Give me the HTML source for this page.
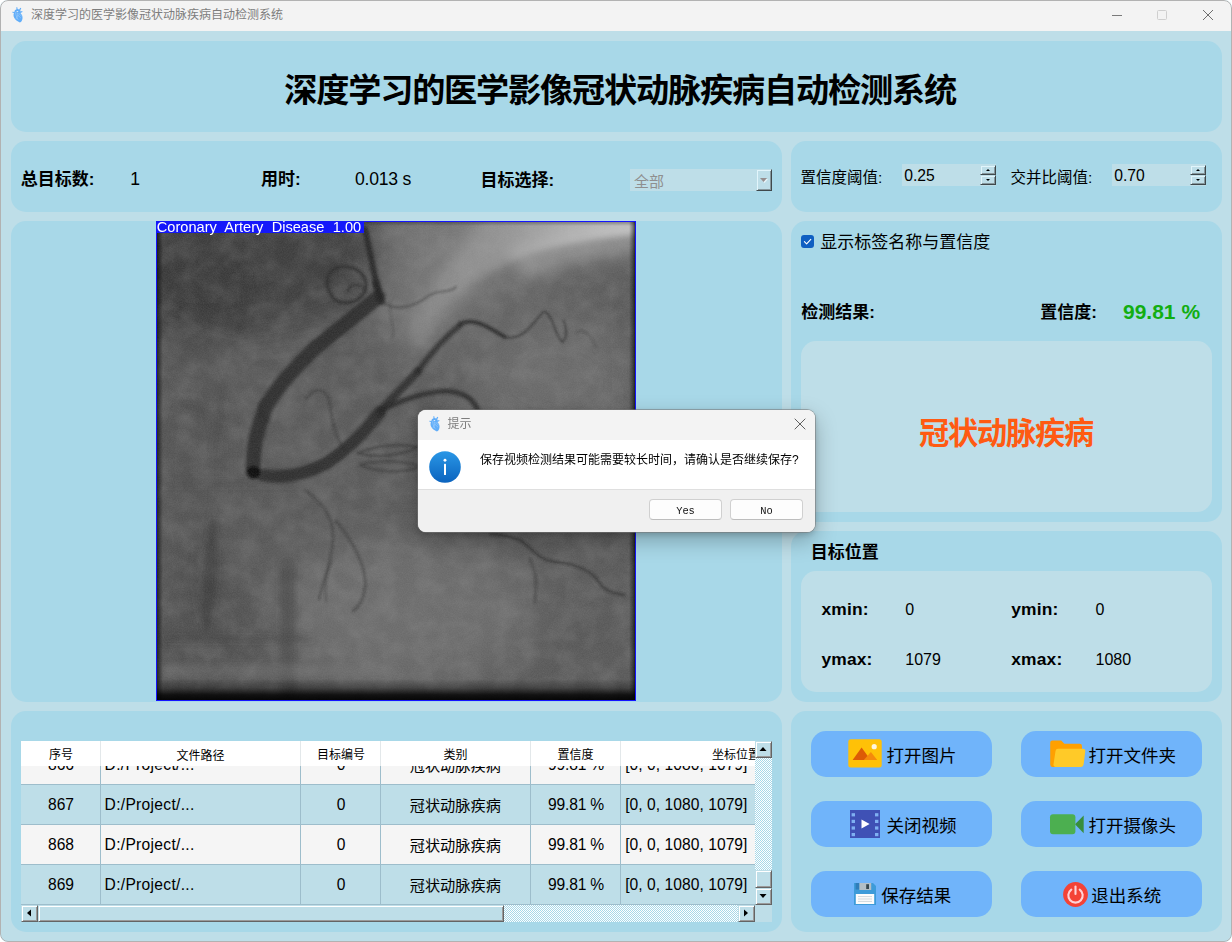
<!DOCTYPE html>
<html lang="zh-CN"><head><meta charset="utf-8"><title>深度学习的医学影像冠状动脉疾病自动检测系统</title>
<style>
html,body{margin:0;padding:0;background:#fff;}
body{width:1232px;height:942px;overflow:hidden;font-family:"Liberation Sans",sans-serif;}
#win{position:relative;width:1232px;height:942px;overflow:hidden;background:#BEDEE8;box-sizing:border-box;border-radius:8px 8px 8px 8px;}
#frame{position:absolute;left:0;top:0;width:1230px;height:940px;border:1px solid #b2b2b2;border-radius:8px;pointer-events:none;}
.g{position:absolute;overflow:visible;display:block;}
.h{position:absolute;color:#000;white-space:nowrap;line-height:1;font-family:"Liberation Sans","Noto Sans CJK SC",sans-serif;}
.hb{font-weight:bold;}
.t{position:absolute;white-space:nowrap;line-height:1;font-family:"Liberation Sans",sans-serif;}
.panel{background:#A8D8E8;border-radius:15px;}
.inner{background:#BEDEE8;border-radius:15px;}
.btn{background:#70B4FA;border-radius:15px;}
</style></head>
<body>
<div id="win">
<div class="" style="position:absolute;left:0px;top:0px;width:1232px;height:31px;background:#F3F3F3;border-radius:8px 8px 0 0;"></div>
<svg class="g" style="left:11.7px;top:7.1px" width="10.8" height="15.6" viewBox="0 0 10.8 15.6"><path d="M4.3 0.3 L5.3 0.2 L5.6 2 L7.2 2.4 L8.3 0.8 L9.3 1.3 L8.3 3.2 L8.6 4.4 L10.2 3.9 L10.5 4.9 L8.4 5.9 C10 7.2 10.8 9.4 10.5 11.4 C10.2 13.6 9.2 15 7.9 15.4 C5.4 14.6 3.2 13 2.2 10.8 C1.3 8.8 1.4 7 2 5.9 L0.2 5.6 L0.4 4.7 L2.4 4.9 C2.4 3.6 3.2 2.6 4.5 2.2 Z" fill="#62AEF9"/><ellipse cx="5.4" cy="4.4" rx="0.95" ry="0.5" fill="#EAF1F8"/><path d="M3.6 5.6 C3.8 8 4.6 10.4 6 12.4 M5.2 5.8 C5.6 8 7 9.8 8.6 10.8 M6.9 6.4 C7.6 7.6 8.4 8.4 9.4 8.9 M4.2 11.6 C4.8 10.6 5.6 9.4 5.8 8.2" stroke="#A9D3FC" stroke-width="0.55" fill="none" stroke-linecap="round"/></svg>
<span class="h" style="left:31.0px;top:8.9px;font-size:12.0px;color:#7d7d7d;">深度学习的医学影像冠状动脉疾病自动检测系统</span>
<svg class="g" style="left:1100px;top:0" width="132" height="31" viewBox="0 0 132 31"><path d="M12 15.5 H22" stroke="#7a7a7a" stroke-width="1"/><rect x="57.5" y="10.5" width="9" height="9" rx="1" fill="none" stroke="#cfcfcf" stroke-width="1"/><path d="M103 10 L113 20 M113 10 L103 20" stroke="#6e6e6e" stroke-width="1"/></svg>
<div class="panel" style="position:absolute;left:11px;top:41px;width:1211px;height:91px;"></div>
<div class="panel" style="position:absolute;left:11px;top:141px;width:771px;height:71px;"></div>
<div class="panel" style="position:absolute;left:791px;top:141px;width:431px;height:71px;"></div>
<div class="panel" style="position:absolute;left:11px;top:221px;width:771px;height:481px;"></div>
<div class="panel" style="position:absolute;left:791px;top:221px;width:431px;height:301px;"></div>
<div class="panel" style="position:absolute;left:791px;top:531px;width:431px;height:171px;"></div>
<div class="panel" style="position:absolute;left:11px;top:711px;width:771px;height:221px;"></div>
<div class="panel" style="position:absolute;left:791px;top:711px;width:431px;height:221px;"></div>
<span class="h hb" style="left:284.2px;top:73.6px;font-size:33.2px;letter-spacing:-1.2px;">深度学习的医学影像冠状动脉疾病自动检测系统</span>
<span class="h hb" style="left:20.8px;top:171.2px;font-size:17.0px">总目标数:</span>
<span class="t" style="left:130.20px;top:170.90px;font-size:17.60px;color:#000;">1</span>
<span class="h hb" style="left:261.0px;top:171.2px;font-size:17.0px">用时:</span>
<span class="t" style="left:355.00px;top:170.90px;font-size:17.60px;color:#000;letter-spacing:-0.25px;">0.013 s</span>
<span class="h hb" style="left:480.4px;top:172.0px;font-size:17.0px">目标选择:</span>
<div class="" style="position:absolute;left:630px;top:169px;width:142px;height:22px;background:#BEDEE8;"></div>
<span class="h" style="left:634.0px;top:173.6px;font-size:15.0px;color:#8f8f8f;">全部</span>
<div style="position:absolute;left:756px;top:169px;width:16px;height:22px;box-sizing:border-box;background:#BEDEE8;border-left:1px solid #BEDEE8;border-top:1px solid #BEDEE8;border-right:1px solid #3f484b;border-bottom:1px solid #3f484b;box-shadow:inset 1px 1px 0 #e2f5fb,inset -1px -1px 0 #86979c;"></div>
<svg class="g" style="left:760px;top:178px" width="8" height="5" viewBox="0 0 8 5"><path d="M1 1 L8 1 L4.5 5 Z" fill="#eaf6fa"/><path d="M0 0 H7 L3.5 4 Z" fill="#968f8f"/></svg>
<span class="h" style="left:800.6px;top:169.6px;font-size:15.5px">置信度阈值:</span>
<div class="" style="position:absolute;left:902px;top:164px;width:94px;height:22px;background:#BEDEE8;"></div>
<span class="t" style="left:904.20px;top:167.91px;font-size:15.70px;color:#000;">0.25</span>
<div style="position:absolute;left:980px;top:165px;width:16px;height:10px;box-sizing:border-box;background:#BEDEE8;border-left:1px solid #BEDEE8;border-top:1px solid #BEDEE8;border-right:1px solid #3f484b;border-bottom:1px solid #3f484b;box-shadow:inset 1px 1px 0 #e2f5fb,inset -1px -1px 0 #86979c;"></div>
<svg class="g" style="left:985.5px;top:169px" width="4" height="2" viewBox="0 0 4 2"><path d="M0 2 L2 0 L4 2 Z" fill="#000"/></svg>
<div style="position:absolute;left:980px;top:175px;width:16px;height:10px;box-sizing:border-box;background:#BEDEE8;border-left:1px solid #BEDEE8;border-top:1px solid #BEDEE8;border-right:1px solid #3f484b;border-bottom:1px solid #3f484b;box-shadow:inset 1px 1px 0 #e2f5fb,inset -1px -1px 0 #86979c;"></div>
<svg class="g" style="left:985.5px;top:179px" width="4" height="2" viewBox="0 0 4 2"><path d="M0 0 L4 0 L2 2 Z" fill="#000"/></svg>
<span class="h" style="left:1010.6px;top:169.6px;font-size:15.5px">交并比阈值:</span>
<div class="" style="position:absolute;left:1112px;top:164px;width:94px;height:22px;background:#BEDEE8;"></div>
<span class="t" style="left:1114.20px;top:167.91px;font-size:15.70px;color:#000;">0.70</span>
<div style="position:absolute;left:1190px;top:165px;width:16px;height:10px;box-sizing:border-box;background:#BEDEE8;border-left:1px solid #BEDEE8;border-top:1px solid #BEDEE8;border-right:1px solid #3f484b;border-bottom:1px solid #3f484b;box-shadow:inset 1px 1px 0 #e2f5fb,inset -1px -1px 0 #86979c;"></div>
<svg class="g" style="left:1195.5px;top:169px" width="4" height="2" viewBox="0 0 4 2"><path d="M0 2 L2 0 L4 2 Z" fill="#000"/></svg>
<div style="position:absolute;left:1190px;top:175px;width:16px;height:10px;box-sizing:border-box;background:#BEDEE8;border-left:1px solid #BEDEE8;border-top:1px solid #BEDEE8;border-right:1px solid #3f484b;border-bottom:1px solid #3f484b;box-shadow:inset 1px 1px 0 #e2f5fb,inset -1px -1px 0 #86979c;"></div>
<svg class="g" style="left:1195.5px;top:179px" width="4" height="2" viewBox="0 0 4 2"><path d="M0 0 L4 0 L2 2 Z" fill="#000"/></svg>
<svg class="g" style="left:156px;top:221px" width="480" height="480" viewBox="0 0 480 480">
<defs>
<filter id="b1" x="-20%" y="-20%" width="140%" height="140%"><feGaussianBlur stdDeviation="0.9"/></filter>
<filter id="b15" x="-20%" y="-20%" width="140%" height="140%"><feGaussianBlur stdDeviation="1.5"/></filter>
<filter id="b3" x="-20%" y="-20%" width="140%" height="140%"><feGaussianBlur stdDeviation="3"/></filter>
<filter id="b8" x="-30%" y="-30%" width="160%" height="160%"><feGaussianBlur stdDeviation="7"/></filter>
<filter id="b20" x="-40%" y="-40%" width="180%" height="180%"><feGaussianBlur stdDeviation="20"/></filter>
<filter id="nz" x="0" y="0" width="100%" height="100%"><feTurbulence type="fractalNoise" baseFrequency="0.8" numOctaves="2" seed="7"/><feColorMatrix type="matrix" values="0 0 0 0 0.5  0 0 0 0 0.5  0 0 0 0 0.5  0.6 0 0 0 -0.14"/></filter>
<filter id="nz2" x="0" y="0" width="100%" height="100%"><feTurbulence type="fractalNoise" baseFrequency="0.05" numOctaves="3" seed="11"/><feColorMatrix type="matrix" values="0 0 0 0 0.40  0 0 0 0 0.40  0 0 0 0 0.40  1.4 0 0 0 -0.45"/></filter>
<linearGradient id="vb" x1="0" y1="0" x2="0" y2="1"><stop offset="0" stop-color="#000" stop-opacity="0"/><stop offset=".4" stop-color="#000" stop-opacity=".32"/><stop offset=".72" stop-color="#000" stop-opacity=".82"/><stop offset="1" stop-color="#000" stop-opacity=".96"/></linearGradient>
<linearGradient id="vt" x1="0" y1="1" x2="0" y2="0"><stop offset="0" stop-color="#000" stop-opacity="0"/><stop offset="1" stop-color="#000" stop-opacity=".35"/></linearGradient>
<linearGradient id="vl" x1="1" y1="0" x2="0" y2="0"><stop offset="0" stop-color="#000" stop-opacity="0"/><stop offset="1" stop-color="#000" stop-opacity=".7"/></linearGradient>
<linearGradient id="vr" x1="0" y1="0" x2="1" y2="0"><stop offset="0" stop-color="#000" stop-opacity="0"/><stop offset=".6" stop-color="#000" stop-opacity=".4"/><stop offset="1" stop-color="#000" stop-opacity=".85"/></linearGradient>
<linearGradient id="wg" gradientUnits="userSpaceOnUse" x1="270" y1="0" x2="480" y2="0"><stop offset="0" stop-color="#c8c8c8" stop-opacity="0"/><stop offset=".35" stop-color="#c8c8c8" stop-opacity=".18"/><stop offset=".7" stop-color="#cacaca" stop-opacity=".62"/><stop offset="1" stop-color="#d0d0d0" stop-opacity=".8"/></linearGradient>
<clipPath id="cp"><rect x="0" y="0" width="480" height="480"/></clipPath>
</defs>
<g clip-path="url(#cp)">
<rect width="480" height="480" fill="#5a5a5a"/>
<!-- broad light / dark fields -->
<g filter="url(#b20)">
<path d="M228 -20 H500 V34 Q380 44 320 90 Q285 120 262 146 L232 118 Z" fill="#7a7a7a" opacity=".85"/>
<ellipse cx="80" cy="35" rx="150" ry="75" fill="#3a3a3a" opacity=".85"/>
<ellipse cx="30" cy="70" rx="60" ry="60" fill="#383838" opacity=".5"/>
<ellipse cx="30" cy="250" rx="45" ry="120" fill="#505050" opacity=".6"/>
<ellipse cx="45" cy="410" rx="60" ry="70" fill="#4c4c4c" opacity=".7"/>
<ellipse cx="250" cy="390" rx="130" ry="75" fill="#717171" opacity=".8"/>
<ellipse cx="400" cy="160" rx="90" ry="70" fill="#707070" opacity=".7"/>
<ellipse cx="440" cy="330" rx="50" ry="50" fill="#5c5c5c" opacity=".6"/>
</g>
<!-- bright arc upper right (lung edge) -->
<g filter="url(#b8)">
<path d="M262 128 Q300 62 372 32 Q430 12 480 8 L480 -10 L330 -10 Q290 40 250 110 Z" fill="#a0a0a0" opacity=".45"/>
<path d="M360 44 Q415 22 485 14" stroke="#c0c0c0" stroke-width="30" fill="none" opacity=".36"/>
<path d="M470 60 Q476 200 470 330" stroke="#555" stroke-width="14" fill="none" opacity=".3"/>
</g>
<g filter="url(#b3)"><path d="M270 -6 L486 -6 L486 13 Q420 19 372 33 Q330 48 296 78 Q276 96 262 122 Q262 50 270 -6 Z" fill="url(#wg)"/></g>
<!-- mottled tissue texture -->
<rect width="480" height="480" filter="url(#nz2)" opacity=".24"/>
<!-- soft anatomical shadows -->
<g filter="url(#b3)" fill="none" stroke-linecap="round" stroke-linejoin="round">
<path d="M88 52 Q94 82 84 106" stroke="#333" stroke-width="9" opacity=".55"/>
<path d="M24 72 Q52 104 84 106" stroke="#3a3a3a" stroke-width="10" opacity=".35"/>
<path d="M57 298 C47 338 44 378 50 410 C61 380 63 338 57 298 Z" fill="#303030" stroke="#303030" stroke-width="3" opacity=".5"/>
<path d="M40 330 Q36 370 46 400" stroke="#3a3a3a" stroke-width="4" opacity=".3"/>
<path d="M132 345 V470" stroke="#3a3a3a" stroke-width="16" opacity=".4"/>
<path d="M0 262 H150" stroke="#444" stroke-width="6" opacity=".3"/>
<path d="M8 418 H155" stroke="#3c3c3c" stroke-width="5" opacity=".38"/>
<path d="M68 160 L58 240" stroke="#3c3c3c" stroke-width="6" opacity=".35"/>
<path d="M30 185 L80 200" stroke="#3c3c3c" stroke-width="5" opacity=".3"/>
<path d="M10 450 H230" stroke="#7a7a7a" stroke-width="12" opacity=".35"/>
</g>
<!-- thin vessels -->
<g filter="url(#b1)" fill="none" stroke="#2c2c2c" stroke-linecap="round" stroke-linejoin="round">
<path d="M174 72 C166 56 176 44 192 46 C206 48 214 60 208 72 C200 84 180 86 174 72 Z" stroke-width="3.4" opacity=".75"/>
<path d="M192 70 C194 62 206 62 210 70" stroke-width="2.4" opacity=".65"/>
<path d="M228 82 C240 90 256 86 268 78 C282 66 292 74 300 66" stroke-width="1.8" opacity=".45"/>
<path d="M201 232 C222 224 246 222 262 226 C248 234 222 238 201 232 Z" stroke-width="2" opacity=".55"/>
<path d="M204 244 C226 238 252 240 264 246 C248 252 222 252 204 244 Z" stroke-width="2" opacity=".5"/>
<path d="M150 178 C160 164 172 168 174 184 C176 204 182 222 190 230" stroke-width="2.2" opacity=".45"/>
<path d="M150 270 C166 282 178 296 177 318 C176 340 168 356 163 378" stroke-width="2.4" opacity=".42"/>
<path d="M180 300 C192 314 200 326 206 344 C212 362 210 380 197 390" stroke-width="2.4" opacity=".45"/>
<path d="M176 340 C170 352 168 364 170 380" stroke-width="2" opacity=".35"/>
<path d="M335 313 C348 314 356 316 364 319 C374 326 380 334 388 338 C398 342 408 341 417 344 C426 347 432 350 437 354 C443 360 445 365 449 368 C456 372 462 373 468 374" stroke-width="2.8" opacity=".55"/>
<path d="M374 338 C377 346 380 352 380 360 C380 368 379 374 379 381" stroke-width="2.6" opacity=".42"/>
<path d="M304 102 C319 96 330 106 349 116 C366 120 376 104 387 91 C396 90 398 112 406 121 C412 118 410 106 408 100" stroke-width="2.2" opacity=".6"/>
<path d="M420 112 C428 106 436 116 440 126" stroke-width="1.6" opacity=".35"/>
<path d="M108 178 C100 186 104 196 112 200" stroke-width="2" opacity=".4"/>
<path d="M234 80 C232 96 240 104 236 118" stroke-width="1.5" opacity=".3"/>
</g>
<!-- main vessels -->
<g filter="url(#b15)" fill="none" stroke="#222" stroke-linecap="round" stroke-linejoin="round">
<path d="M209 8 C213 28 218 50 223 76" stroke-width="6" opacity=".88"/>
<path d="M220 62 L225 80" stroke-width="8" opacity=".8"/>
<path d="M222 76 C202 93 180 110 158 128 C140 146 120 166 109 188 C101 208 97 230 97 248" stroke-width="14.6" opacity=".74"/>
<path d="M106 254 C128 258 150 253 171 242 C192 228 209 211 224 191" stroke-width="12.6" opacity=".74"/>
<path d="M224 191 C236 176 250 164 262 150" stroke-width="8.2" opacity=".74"/>
<path d="M262 150 C272 136 288 117 304 104" stroke-width="6" opacity=".72"/>
<path d="M304 104 C316 96 330 104 349 116" stroke-width="3.6" opacity=".7"/>
<path d="M226 189 C248 178 268 171 290 170 C308 171 318 178 322 190" stroke-width="5.2" opacity=".75"/>
<circle cx="97.5" cy="251.3" r="6.8" fill="#101010" stroke="none" opacity=".96"/>
</g>
<!-- film grain -->
<rect width="480" height="480" filter="url(#nz)" opacity=".3"/>
<!-- vignette -->
<rect x="0" y="458" width="480" height="22" fill="url(#vb)"/>
<rect x="0" y="0" width="480" height="5" fill="url(#vt)"/>
<rect x="0" y="0" width="7" height="480" fill="url(#vl)"/>
<rect x="473" y="0" width="7" height="480" fill="url(#vr)"/>
</g>
<!-- detection box + label -->
<rect x="0.5" y="0.5" width="479" height="479" fill="none" stroke="#1414FF" stroke-width="1"/>
<rect x="0" y="0" width="208" height="12" fill="#1418FA"/>
</svg>
<span class="t" style="left:156.80px;top:219.94px;font-size:14.60px;color:#fff;word-spacing:4.3px;">Coronary Artery Disease 1.00</span>
<div style="position:absolute;left:801px;top:235px;width:13px;height:13px;border-radius:3px;background:#0F5FC2;"></div>
<svg class="g" style="left:801px;top:235px" width="13" height="13" viewBox="0 0 13 13"><path d="M3.4 6.7 L5.6 8.9 L9.8 4.4" fill="none" stroke="#fff" stroke-width="1.1" stroke-linecap="round" stroke-linejoin="round"/></svg>
<span class="h" style="left:820.3px;top:233.8px;font-size:17.0px">显示标签名称与置信度</span>
<span class="h hb" style="left:801.2px;top:303.7px;font-size:17.0px">检测结果:</span>
<span class="h hb" style="left:1040.3px;top:303.7px;font-size:17.0px">置信度:</span>
<span class="t" style="left:1123.00px;top:300.82px;font-size:21.00px;color:#12AE12;font-weight:bold;">99.81 %</span>
<div class="inner" style="position:absolute;left:801px;top:341px;width:411px;height:171px;"></div>
<span class="h hb" style="left:919.0px;top:419.3px;font-size:30.2px;color:#FF5A12;letter-spacing:-1.2px;">冠状动脉疾病</span>
<span class="h hb" style="left:810.8px;top:543.8px;font-size:17.0px">目标位置</span>
<div class="inner" style="position:absolute;left:801px;top:571px;width:411px;height:121px;"></div>
<span class="t" style="left:821.50px;top:600.97px;font-size:17.40px;color:#000;font-weight:bold;letter-spacing:0.15px;">xmin:</span>
<span class="t" style="left:905.30px;top:602.16px;font-size:16.00px;color:#000;">0</span>
<span class="t" style="left:1011.30px;top:600.97px;font-size:17.40px;color:#000;font-weight:bold;letter-spacing:0.15px;">ymin:</span>
<span class="t" style="left:1095.50px;top:602.16px;font-size:16.00px;color:#000;">0</span>
<span class="t" style="left:821.50px;top:650.97px;font-size:17.40px;color:#000;font-weight:bold;letter-spacing:0.15px;">ymax:</span>
<span class="t" style="left:905.30px;top:652.16px;font-size:16.00px;color:#000;">1079</span>
<span class="t" style="left:1011.30px;top:650.97px;font-size:17.40px;color:#000;font-weight:bold;letter-spacing:0.15px;">xmax:</span>
<span class="t" style="left:1095.50px;top:652.16px;font-size:16.00px;color:#000;">1080</span>
<div class="btn" style="position:absolute;left:811px;top:731px;width:181px;height:46px;"></div>
<div class="btn" style="position:absolute;left:811px;top:801px;width:181px;height:46px;"></div>
<div class="btn" style="position:absolute;left:811px;top:871px;width:181px;height:46px;"></div>
<div class="btn" style="position:absolute;left:1021px;top:731px;width:181px;height:46px;"></div>
<div class="btn" style="position:absolute;left:1021px;top:801px;width:181px;height:46px;"></div>
<div class="btn" style="position:absolute;left:1021px;top:871px;width:181px;height:46px;"></div>
<svg class="g" style="left:848px;top:739.2px" width="34" height="29" viewBox="0 0 34 29"><rect x="0.3" y="0.2" width="33.4" height="28.4" rx="2.5" fill="#FFC107"/><path d="M4.6 21 L13.6 8.4 L22.6 21 Z" fill="#DD5B06"/><path d="M15.8 21 L22.9 12.9 L29.2 21 Z" fill="#F58A0B"/><circle cx="26.2" cy="7.7" r="2.6" fill="#FFF6DC"/></svg>
<span class="h" style="left:886.6px;top:747.5px;font-size:17.5px">打开图片</span>
<svg class="g" style="left:1050px;top:740px" width="36" height="28" viewBox="0 0 36 28"><path d="M2.4 0.4 H11.2 L14.4 3.8 H29.6 Q32 3.8 32 6.2 V24 Q32 26.9 29.2 26.9 H2.6 Q0.2 26.9 0.2 24.4 V2.8 Q0.2 0.4 2.4 0.4 Z" fill="#FFA000"/><path d="M8 8.7 H33 Q35.6 8.7 35.3 11.2 L33.6 24.6 Q33.3 26.9 31 26.9 H5.4 Q3.2 26.9 3.5 24.6 L5.5 10.9 Q5.8 8.7 8 8.7 Z" fill="#FFCA28"/></svg>
<span class="h" style="left:1088.6px;top:747.5px;font-size:17.5px">打开文件夹</span>
<svg class="g" style="left:850px;top:810px" width="30" height="28" viewBox="0 0 30 28"><rect x="0" y="0" width="30" height="28" fill="#3F51B5"/><rect x="1.6" y="3.2" width="3.4" height="3.2" fill="#7FB0F2"/><rect x="25.0" y="3.2" width="3.4" height="3.2" fill="#7FB0F2"/><rect x="1.6" y="9.8" width="3.4" height="3.2" fill="#7FB0F2"/><rect x="25.0" y="9.8" width="3.4" height="3.2" fill="#7FB0F2"/><rect x="1.6" y="16.4" width="3.4" height="3.2" fill="#7FB0F2"/><rect x="25.0" y="16.4" width="3.4" height="3.2" fill="#7FB0F2"/><rect x="1.6" y="23" width="3.4" height="3.2" fill="#7FB0F2"/><rect x="25.0" y="23" width="3.4" height="3.2" fill="#7FB0F2"/><path d="M11.5 9.4 L19.6 14 L11.5 18.6 Z" fill="#fff"/></svg>
<span class="h" style="left:886.6px;top:817.5px;font-size:17.5px">关闭视频</span>
<svg class="g" style="left:1050px;top:813.5px" width="35" height="21" viewBox="0 0 35 21"><path d="M25 10.2 L33.7 1.6 V19.2 Z" fill="#388E3C"/><rect x="0" y="0.3" width="25.4" height="20" rx="3" fill="#4CAF50"/></svg>
<span class="h" style="left:1088.6px;top:817.5px;font-size:17.5px">打开摄像头</span>
<svg class="g" style="left:854px;top:883px" width="22" height="22" viewBox="0 0 22 22"><path d="M0 0 H19 L22 3 V22 H0 Z" fill="#3D9BD9"/><rect x="1.6" y="0" width="3.8" height="6.5" fill="#2F7DBA"/><rect x="5.4" y="0" width="11.8" height="7" fill="#B3BEC6"/><rect x="12.2" y="1.2" width="2.8" height="4.8" fill="#37474F"/><rect x="1.8" y="11" width="18.4" height="10" fill="#FCFCFC"/><path d="M4 13.6 H18 M4 16 H18 M4 18.4 H18" stroke="#CFD8DC" stroke-width="1"/></svg>
<span class="h" style="left:881.2px;top:887.5px;font-size:17.5px">保存结果</span>
<svg class="g" style="left:1062.5px;top:881.5px" width="25" height="25" viewBox="0 0 25 25"><circle cx="12.5" cy="12.5" r="12.4" fill="#F44336"/><path d="M8.3 7.6 A7.2 7.2 0 1 0 16.7 7.6" fill="none" stroke="#FFD3D6" stroke-width="2.1" stroke-linecap="round"/><path d="M12.5 4.6 V12" stroke="#FFD3D6" stroke-width="2.1" stroke-linecap="round"/></svg>
<span class="h" style="left:1091.2px;top:887.5px;font-size:17.5px">退出系统</span>
<div style="position:absolute;left:0;top:0;width:755px;height:905px;overflow:hidden;">
<div style="position:absolute;left:0;top:766px;width:755px;height:139px;overflow:hidden;"><div style="position:absolute;left:0;top:-766px;width:755px;height:942px;">
<div class="" style="position:absolute;left:21px;top:745px;width:734px;height:40px;background:#F5F5F5;"></div>
<span class="t" style="left:21.00px;top:757.49px;font-size:15.60px;color:#000;width:80.0px;text-align:center;">866</span>
<span class="t" style="left:104.60px;top:757.49px;font-size:15.60px;color:#000;letter-spacing:0.3px;">D:/Project/...</span>
<span class="t" style="left:301.00px;top:757.49px;font-size:15.60px;color:#000;width:80.0px;text-align:center;">0</span>
<span class="h" style="left:409.7px;top:757.9px;font-size:15.2px">冠状动脉疾病</span>
<span class="t" style="left:531.00px;top:757.49px;font-size:15.60px;color:#000;width:90.0px;text-align:center;letter-spacing:-0.2px;">99.81 %</span>
<span class="t" style="left:625.20px;top:757.49px;font-size:15.60px;color:#000;letter-spacing:0.05px;">[0, 0, 1080, 1079]</span>
<div class="" style="position:absolute;left:21px;top:784px;width:734px;height:1px;background:#9DBDCB;"></div>
<div class="" style="position:absolute;left:21px;top:785px;width:734px;height:40px;background:#BEDEE8;"></div>
<span class="t" style="left:21.00px;top:797.49px;font-size:15.60px;color:#000;width:80.0px;text-align:center;">867</span>
<span class="t" style="left:104.60px;top:797.49px;font-size:15.60px;color:#000;letter-spacing:0.3px;">D:/Project/...</span>
<span class="t" style="left:301.00px;top:797.49px;font-size:15.60px;color:#000;width:80.0px;text-align:center;">0</span>
<span class="h" style="left:409.7px;top:797.9px;font-size:15.2px">冠状动脉疾病</span>
<span class="t" style="left:531.00px;top:797.49px;font-size:15.60px;color:#000;width:90.0px;text-align:center;letter-spacing:-0.2px;">99.81 %</span>
<span class="t" style="left:625.20px;top:797.49px;font-size:15.60px;color:#000;letter-spacing:0.05px;">[0, 0, 1080, 1079]</span>
<div class="" style="position:absolute;left:21px;top:824px;width:734px;height:1px;background:#9DBDCB;"></div>
<div class="" style="position:absolute;left:21px;top:825px;width:734px;height:40px;background:#F5F5F5;"></div>
<span class="t" style="left:21.00px;top:837.49px;font-size:15.60px;color:#000;width:80.0px;text-align:center;">868</span>
<span class="t" style="left:104.60px;top:837.49px;font-size:15.60px;color:#000;letter-spacing:0.3px;">D:/Project/...</span>
<span class="t" style="left:301.00px;top:837.49px;font-size:15.60px;color:#000;width:80.0px;text-align:center;">0</span>
<span class="h" style="left:409.7px;top:837.9px;font-size:15.2px">冠状动脉疾病</span>
<span class="t" style="left:531.00px;top:837.49px;font-size:15.60px;color:#000;width:90.0px;text-align:center;letter-spacing:-0.2px;">99.81 %</span>
<span class="t" style="left:625.20px;top:837.49px;font-size:15.60px;color:#000;letter-spacing:0.05px;">[0, 0, 1080, 1079]</span>
<div class="" style="position:absolute;left:21px;top:864px;width:734px;height:1px;background:#9DBDCB;"></div>
<div class="" style="position:absolute;left:21px;top:865px;width:734px;height:40px;background:#BEDEE8;"></div>
<span class="t" style="left:21.00px;top:877.49px;font-size:15.60px;color:#000;width:80.0px;text-align:center;">869</span>
<span class="t" style="left:104.60px;top:877.49px;font-size:15.60px;color:#000;letter-spacing:0.3px;">D:/Project/...</span>
<span class="t" style="left:301.00px;top:877.49px;font-size:15.60px;color:#000;width:80.0px;text-align:center;">0</span>
<span class="h" style="left:409.7px;top:877.9px;font-size:15.2px">冠状动脉疾病</span>
<span class="t" style="left:531.00px;top:877.49px;font-size:15.60px;color:#000;width:90.0px;text-align:center;letter-spacing:-0.2px;">99.81 %</span>
<span class="t" style="left:625.20px;top:877.49px;font-size:15.60px;color:#000;letter-spacing:0.05px;">[0, 0, 1080, 1079]</span>
<div class="" style="position:absolute;left:21px;top:904px;width:734px;height:1px;background:#9DBDCB;"></div>
<div class="" style="position:absolute;left:100px;top:745px;width:1px;height:160px;background:#9DBDCB;"></div>
<div class="" style="position:absolute;left:300px;top:745px;width:1px;height:160px;background:#9DBDCB;"></div>
<div class="" style="position:absolute;left:380px;top:745px;width:1px;height:160px;background:#9DBDCB;"></div>
<div class="" style="position:absolute;left:530px;top:745px;width:1px;height:160px;background:#9DBDCB;"></div>
<div class="" style="position:absolute;left:620px;top:745px;width:1px;height:160px;background:#9DBDCB;"></div>
</div></div>
<div class="" style="position:absolute;left:21px;top:741px;width:734px;height:25px;background:#FFFFFF;"></div>
<div class="" style="position:absolute;left:100px;top:741px;width:1px;height:25px;background:#E3E8EA;"></div>
<div class="" style="position:absolute;left:300px;top:741px;width:1px;height:25px;background:#E3E8EA;"></div>
<div class="" style="position:absolute;left:380px;top:741px;width:1px;height:25px;background:#E3E8EA;"></div>
<div class="" style="position:absolute;left:530px;top:741px;width:1px;height:25px;background:#E3E8EA;"></div>
<div class="" style="position:absolute;left:620px;top:741px;width:1px;height:25px;background:#E3E8EA;"></div>
<span class="h" style="left:49.0px;top:748.5px;font-size:12.0px">序号</span>
<span class="h" style="left:176.6px;top:749.5px;font-size:12.0px">文件路径</span>
<span class="h" style="left:317.0px;top:748.5px;font-size:12.0px">目标编号</span>
<span class="h" style="left:443.5px;top:748.5px;font-size:12.0px">类别</span>
<span class="h" style="left:557.5px;top:748.5px;font-size:12.0px">置信度</span>
<span class="h" style="left:712.0px;top:748.5px;font-size:12.0px">坐标位置</span>
</div>
<div class="" style="position:absolute;left:755px;top:741px;width:17px;height:164px;background:conic-gradient(#fff 25%,#A8D8E8 0 50%,#fff 0 75%,#A8D8E8 0) 0 0/2px 2px;"></div>
<div style="position:absolute;left:755px;top:741px;width:17px;height:17px;box-sizing:border-box;background:#BEDEE8;border-left:1px solid #BEDEE8;border-top:1px solid #BEDEE8;border-right:1px solid #646464;border-bottom:1px solid #646464;box-shadow:inset 1px 1px 0 #fff,inset -1px -1px 0 #9a9a9a;"></div>
<svg class="g" style="left:758px;top:744px" width="10" height="10" viewBox="-5 -5 10 10"><path d="M-3.5 2 L0 -2 L3.5 2 Z" fill="#000"/></svg>
<div style="position:absolute;left:755px;top:870px;width:17px;height:18px;box-sizing:border-box;background:#BEDEE8;border-left:1px solid #BEDEE8;border-top:1px solid #BEDEE8;border-right:1px solid #646464;border-bottom:1px solid #646464;box-shadow:inset 1px 1px 0 #fff,inset -1px -1px 0 #9a9a9a;"></div>
<div style="position:absolute;left:755px;top:888px;width:17px;height:17px;box-sizing:border-box;background:#BEDEE8;border-left:1px solid #BEDEE8;border-top:1px solid #BEDEE8;border-right:1px solid #646464;border-bottom:1px solid #646464;box-shadow:inset 1px 1px 0 #fff,inset -1px -1px 0 #9a9a9a;"></div>
<svg class="g" style="left:758px;top:891px" width="10" height="10" viewBox="-5 -5 10 10"><path d="M-3.5 -2 L3.5 -2 L0 2 Z" fill="#000"/></svg>
<div class="" style="position:absolute;left:21px;top:905px;width:734px;height:17px;background:conic-gradient(#fff 25%,#A8D8E8 0 50%,#fff 0 75%,#A8D8E8 0) 0 0/2px 2px;"></div>
<div style="position:absolute;left:21px;top:905px;width:17px;height:17px;box-sizing:border-box;background:#BEDEE8;border-left:1px solid #BEDEE8;border-top:1px solid #BEDEE8;border-right:1px solid #646464;border-bottom:1px solid #646464;box-shadow:inset 1px 1px 0 #fff,inset -1px -1px 0 #9a9a9a;"></div>
<svg class="g" style="left:24px;top:908px" width="10" height="10" viewBox="-5 -5 10 10"><path d="M2 -3.5 L-2 0 L2 3.5 Z" fill="#000"/></svg>
<div style="position:absolute;left:38px;top:905px;width:466px;height:17px;box-sizing:border-box;background:#BEDEE8;border-left:1px solid #BEDEE8;border-top:1px solid #BEDEE8;border-right:1px solid #646464;border-bottom:1px solid #646464;box-shadow:inset 1px 1px 0 #fff,inset -1px -1px 0 #9a9a9a;"></div>
<div style="position:absolute;left:738px;top:905px;width:17px;height:17px;box-sizing:border-box;background:#BEDEE8;border-left:1px solid #BEDEE8;border-top:1px solid #BEDEE8;border-right:1px solid #646464;border-bottom:1px solid #646464;box-shadow:inset 1px 1px 0 #fff,inset -1px -1px 0 #9a9a9a;"></div>
<svg class="g" style="left:741px;top:908px" width="10" height="10" viewBox="-5 -5 10 10"><path d="M-2 -3.5 L2 0 L-2 3.5 Z" fill="#000"/></svg>
<div class="" style="position:absolute;left:755px;top:905px;width:17px;height:17px;background:#BEDEE8;"></div>
<div style="position:absolute;left:418px;top:410px;width:397px;height:122px;border-radius:8px;background:#fff;box-shadow:0 0 0 1px rgba(120,120,120,.55),0 8px 22px rgba(0,0,0,.28),0 2px 6px rgba(0,0,0,.18);overflow:hidden;"><div style="position:absolute;left:0;top:0;width:397px;height:30px;background:#F3F3F3;"></div><div style="position:absolute;left:0;top:79px;width:397px;height:43px;background:#F0F0F0;border-top:1px solid #DFDFDF;box-sizing:border-box;"></div></div>
<svg class="g" style="left:428.6px;top:416.1px" width="10.8" height="15.6" viewBox="0 0 10.8 15.6"><path d="M4.3 0.3 L5.3 0.2 L5.6 2 L7.2 2.4 L8.3 0.8 L9.3 1.3 L8.3 3.2 L8.6 4.4 L10.2 3.9 L10.5 4.9 L8.4 5.9 C10 7.2 10.8 9.4 10.5 11.4 C10.2 13.6 9.2 15 7.9 15.4 C5.4 14.6 3.2 13 2.2 10.8 C1.3 8.8 1.4 7 2 5.9 L0.2 5.6 L0.4 4.7 L2.4 4.9 C2.4 3.6 3.2 2.6 4.5 2.2 Z" fill="#62AEF9"/><ellipse cx="5.4" cy="4.4" rx="0.95" ry="0.5" fill="#EAF1F8"/><path d="M3.6 5.6 C3.8 8 4.6 10.4 6 12.4 M5.2 5.8 C5.6 8 7 9.8 8.6 10.8 M6.9 6.4 C7.6 7.6 8.4 8.4 9.4 8.9 M4.2 11.6 C4.8 10.6 5.6 9.4 5.8 8.2" stroke="#A9D3FC" stroke-width="0.55" fill="none" stroke-linecap="round"/></svg>
<span class="h" style="left:447.6px;top:418.4px;font-size:12.0px;color:#7d7d7d;">提示</span>
<svg class="g" style="left:794px;top:418px" width="12" height="12" viewBox="0 0 12 12"><path d="M0.7 0.7 L11.3 11.3 M11.3 0.7 L0.7 11.3" stroke="#5f5f5f" stroke-width="1"/></svg>
<svg class="g" style="left:429px;top:451px" width="32" height="32" viewBox="0 0 32 32"><defs><linearGradient id="ig" x1="0" y1="0" x2="0" y2="1"><stop offset="0" stop-color="#2A97E6"/><stop offset="1" stop-color="#0B63BE"/></linearGradient></defs><circle cx="16" cy="16" r="15.8" fill="url(#ig)"/><circle cx="16" cy="9.3" r="1.45" fill="#fff"/><rect x="15" y="12.8" width="2" height="11.2" rx=".6" fill="#fff"/></svg>
<span class="h" style="left:480.0px;top:454.1px;font-size:12.0px">保存视频检测结果可能需要较长时间，请确认是否继续保存?</span>
<div style="position:absolute;left:649px;top:499px;width:73px;height:21px;box-sizing:border-box;background:#FDFDFD;border:1px solid #D0D0D0;border-bottom-color:#BDBDBD;border-radius:4px;"></div>
<span class="t" style="left:649.00px;top:505.63px;font-size:10.40px;color:#000;font-family:'Liberation Mono',monospace;width:73.0px;text-align:center;color:#111;">Yes</span>
<div style="position:absolute;left:730px;top:499px;width:73px;height:21px;box-sizing:border-box;background:#FDFDFD;border:1px solid #D0D0D0;border-bottom-color:#BDBDBD;border-radius:4px;"></div>
<span class="t" style="left:730.00px;top:505.63px;font-size:10.40px;color:#000;font-family:'Liberation Mono',monospace;width:73.0px;text-align:center;color:#111;">No</span>
<div id="frame"></div>
</div>
</body></html>
